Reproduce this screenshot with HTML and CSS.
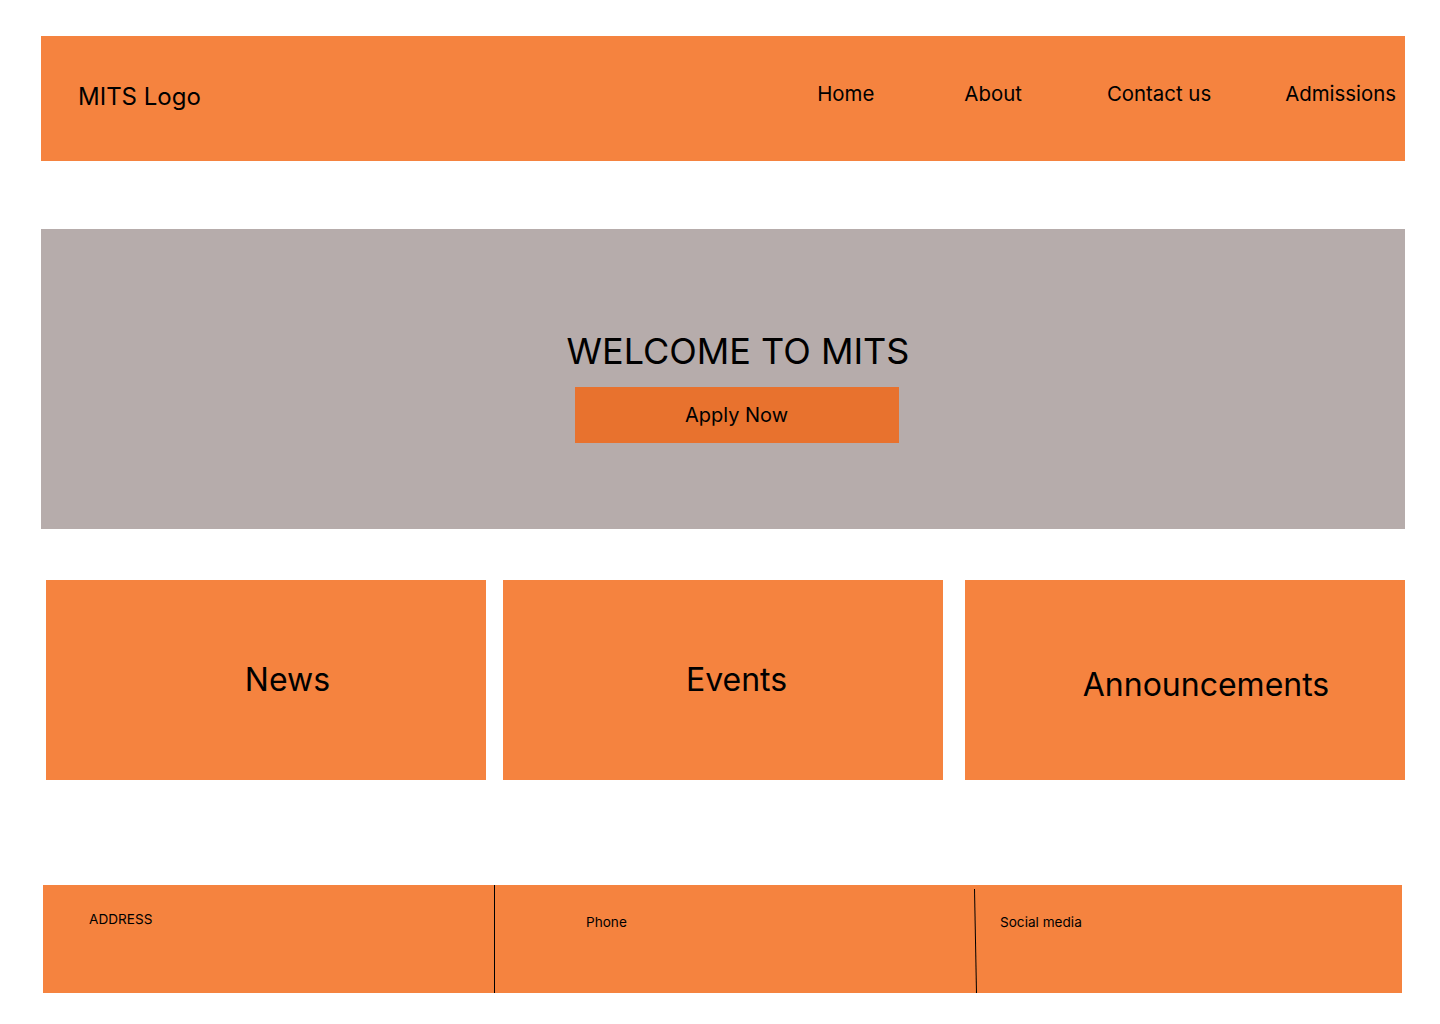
FILE: index.html
```html
<!DOCTYPE html>
<html lang="en">
<head>
<meta charset="utf-8">
<title>MITS</title>
<link rel="stylesheet" href="styles.css">
</head>
<body>
<header class="topbar">
  <div class="logo">MITS Logo</div>
  <nav class="nav">
    <a class="nav-item nav-home">Home</a>
    <a class="nav-item nav-about">About</a>
    <a class="nav-item nav-contact">Contact us</a>
    <a class="nav-item nav-adm">Admissions</a>
  </nav>
</header>

<section class="hero">
  <h1 class="hero-title">WELCOME TO MITS</h1>
  <button class="apply">Apply Now</button>
</section>

<section class="cards">
  <div class="card card-news"><span>News</span></div>
  <div class="card card-events"><span>Events</span></div>
  <div class="card card-ann"><span>Announcements</span></div>
</section>

<footer class="footer">
  <div class="fcol fcol-address"><span>ADDRESS</span></div>
  <div class="fcol fcol-phone"><span>Phone</span></div>
  <div class="fcol fcol-social"><span>Social media</span></div>
</footer>
</body>
</html>
```

FILE: styles.css
```css
* { box-sizing: border-box; }
html, body { margin: 0; padding: 0; background: #fff; }
body {
  font-family: Inter, "Noto Sans", sans-serif;
  color: #000;
  width: 1440px;
  padding-top: 36px;
}

.topbar {
  margin-left: 41px;
  width: 1364px;
  height: 125px;
  background: #F5833F;
  display: flex;
  align-items: center;
  padding-left: 37px;
}
.logo {
  font-family: Inter, sans-serif;
  font-size: 24px;
  margin-top: -5px;
}
.nav {
  margin-left: auto;
  display: flex;
  align-items: center;
  font-family: Inter, sans-serif;
  font-size: 20.4px;
  padding-right: 9px;
  margin-top: -11px;
}
.nav-item { color: #000; text-decoration: none; }
.nav-about { margin-left: 90px; }
.nav-contact { margin-left: 85px; }
.nav-adm { margin-left: 74px; }

.hero {
  margin: 68px 0 0 41px;
  width: 1364px;
  height: 300px;
  background: #B6ACAB;
  display: flex;
  flex-direction: column;
  align-items: center;
  padding-top: 100px;
  padding-left: 30px;
}
.hero-title {
  margin: 0;
  font-weight: 400;
  font-size: 36px;
  line-height: 44px;
}
.apply {
  margin-top: 14px;
  margin-right: 3px;
  width: 324px;
  height: 56px;
  border: 0;
  background: #E8722E;
  font-family: Inter, sans-serif;
  font-size: 20px;
  color: #000;
  padding: 0;
}

.cards {
  display: flex;
  margin: 51px 0 0 46px;
  width: 1359px;
}
.card {
  width: 440px;
  height: 200px;
  background: #F5833F;
  display: flex;
  align-items: center;
  justify-content: center;
  font-size: 32px;
}
.card-news span { margin-left: 43px; margin-top: -2px; }
.card-events { margin-left: 17px; }
.card-events span { margin-left: 27px; margin-top: -2px; }
.card-ann { margin-left: 22px; }
.card-ann span { margin-left: 42px; margin-top: 8px; }

.footer {
  display: flex;
  margin: 105px 0 0 43px;
  width: 1359px;
  height: 108px;
  background: #F5833F;
  font-size: 13.6px;
}
.fcol { position: relative; }
.fcol-address { width: 451px; padding: 26px 0 0 46px; }
.fcol-phone {
  width: 480px;
  border-left: 1px solid #000;
  padding: 29px 0 0 91px;
}
.fcol-social {
  flex: 1;
  padding: 29px 0 0 26px;
}
.fcol-social::before {
  content: "";
  position: absolute;
  left: 0;
  top: 4px;
  bottom: 0;
  width: 1px;
  background: #000;
  transform: rotate(-1.1deg);
  transform-origin: top left;
}
```
